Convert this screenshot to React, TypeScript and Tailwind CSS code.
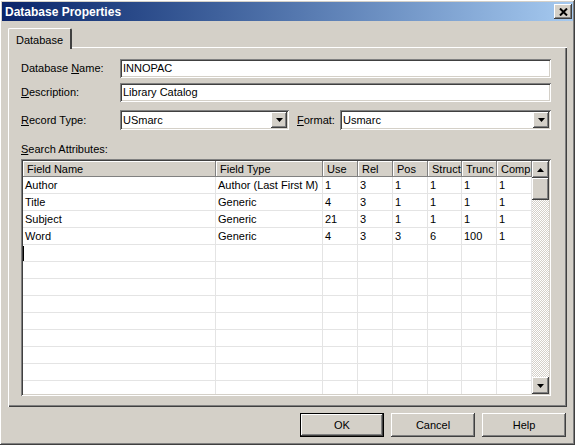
import React from 'react';

const raised =
  'shadow-[inset_-1px_-1px_#404040,inset_1px_1px_#ffffff,inset_-2px_-2px_#808080,inset_2px_2px_#d4d0c8]';
const sunken =
  'shadow-[inset_1px_1px_#808080,inset_-1px_-1px_#ffffff,inset_2px_2px_#404040,inset_-2px_-2px_#d4d0c8]';

const columns = [
  { name: 'Field Name', w: 'w-[193px]' },
  { name: 'Field Type', w: 'w-[107px]' },
  { name: 'Use', w: 'w-[35px]' },
  { name: 'Rel', w: 'w-[35px]' },
  { name: 'Pos', w: 'w-[35px]' },
  { name: 'Struct', w: 'w-[34px]' },
  { name: 'Trunc', w: 'w-[35px]' },
  { name: 'Comp', w: 'w-[35px]' },
];

const rows: string[][] = [
  ['Author', 'Author (Last First M)', '1', '3', '1', '1', '1', '1'],
  ['Title', 'Generic', '4', '3', '1', '1', '1', '1'],
  ['Subject', 'Generic', '21', '3', '1', '1', '1', '1'],
  ['Word', 'Generic', '4', '3', '3', '6', '100', '1'],
];

const emptyRows = 9;

function Arrow({ up }: { up?: boolean }) {
  return (
    <svg width="7" height="4" viewBox="0 0 7 4">
      {up ? <path d="M3.5 0 L7 4 L0 4 Z" fill="#000" /> : <path d="M0 0 L7 0 L3.5 4 Z" fill="#000" />}
    </svg>
  );
}

function TextField({ value }: { value: string }) {
  return (
    <div className={`flex-1 h-full bg-white flex items-center pl-[3px] ${sunken}`}>
      <span className="leading-none">{value}</span>
    </div>
  );
}

function Combo({ value, className }: { value: string; className: string }) {
  return (
    <div className={`h-full bg-white flex items-center p-[2px] ${sunken} ${className}`}>
      <span className="flex-1 pl-[1px] leading-none">{value}</span>
      <div className={`w-[16px] h-[16px] bg-[#d4d0c8] flex items-center justify-center ${raised}`}>
        <Arrow />
      </div>
    </div>
  );
}

function Label({ pre, key_, post, className }: { pre: string; key_: string; post: string; className?: string }) {
  return (
    <span className={className}>
      {pre}
      <span className="underline underline-offset-[1px]">{key_}</span>
      {post}
    </span>
  );
}

function DialogButton({ label, isDefault }: { label: string; isDefault?: boolean }) {
  return (
    <div
      className={`w-[84px] h-[24px] bg-[#d4d0c8] flex items-center justify-center ${
        isDefault ? 'border border-black' : ''
      }`}
    >
      <div className={`w-full h-full flex items-center justify-center ${raised}`}>{label}</div>
    </div>
  );
}

export default function App() {
  return (
    <div
      className={`w-[575px] h-[445px] bg-[#d4d0c8] flex flex-col p-[2px] text-[11px] text-black font-['Liberation_Sans',Arial,sans-serif] ${raised}`}
    >
      {/* title bar */}
      <div className="h-[19px] bg-gradient-to-r from-[#0a246a] to-[#a6caf0] flex items-center justify-between pl-[3px] pr-[1px]">
        <span className="text-white font-bold text-[12px]">Database Properties</span>
        <div className={`w-[18px] h-[15px] bg-[#d4d0c8] flex items-center justify-center ${raised}`}>
          <svg width="9" height="8" viewBox="0 0 9 8">
            <path d="M1 0.5 L8 7.5 M8 0.5 L1 7.5" stroke="#000" strokeWidth="2" />
          </svg>
        </div>
      </div>

      <div className="flex-1 flex flex-col px-[6px] pt-[7px]">
        {/* tab strip */}
        <div className="flex h-[20px] relative z-10 -mb-px">
          <div className="w-[64px] h-[21px] bg-[#d4d0c8] border-t border-l border-white border-r-2 border-r-[#404040] rounded-t-[2px] flex items-start pt-[3px] pl-[7px]">
            Database
          </div>
        </div>

        {/* tab page */}
        <div
          className={`h-[360px] bg-[#d4d0c8] flex flex-col pl-[13px] pr-[16px] pt-[12px] pb-[11px] shadow-[inset_1px_1px_#ffffff,inset_-1px_-1px_#404040,inset_-2px_-2px_#808080]`}
        >
          <div className="flex items-center h-[19px]">
            <Label className="w-[99px]" pre="Database " key_="N" post="ame:" />
            <TextField value="INNOPAC" />
          </div>
          <div className="flex items-center h-[19px] mt-[5px]">
            <Label className="w-[99px]" pre="" key_="D" post="escription:" />
            <TextField value="Library Catalog" />
          </div>
          <div className="flex items-center h-[20px] mt-[8px]">
            <Label className="w-[99px]" pre="" key_="R" post="ecord Type:" />
            <Combo className="w-[169px]" value="USmarc" />
            <Label className="w-[43px] ml-[8px]" pre="" key_="F" post="ormat:" />
            <Combo className="flex-1" value="Usmarc" />
          </div>
          <div className="flex items-center h-[16px] mt-[11px]">
            <Label pre="" key_="S" post="earch Attributes:" />
          </div>

          {/* grid */}
          <div className={`flex-1 mt-[2px] bg-white p-[2px] flex overflow-hidden ${sunken}`}>
            <div className="flex flex-col w-[509px] overflow-hidden">
              <div className="flex h-[16px] shrink-0">
                {columns.map((c) => (
                  <div
                    key={c.name}
                    className={`${c.w} shrink-0 h-full bg-[#d4d0c8] pl-[4px] flex items-center whitespace-nowrap overflow-hidden shadow-[inset_-1px_-1px_#808080,inset_1px_1px_#ffffff]`}
                  >
                    {c.name}
                  </div>
                ))}
              </div>
              {rows.map((r, i) => (
                <div key={i} className="flex h-[17px] shrink-0 border-b border-[#e4e4e4]">
                  {r.map((v, j) => (
                    <div
                      key={j}
                      className={`${columns[j].w} shrink-0 h-full pl-[2px] flex items-center whitespace-nowrap overflow-hidden border-r border-[#e4e4e4]`}
                    >
                      {v}
                    </div>
                  ))}
                </div>
              ))}
              {Array.from({ length: emptyRows }).map((_, i) => (
                <div key={`e${i}`} className="flex h-[17px] shrink-0 border-b border-[#e4e4e4]">
                  {columns.map((c, j) => (
                    <div key={j} className={`${c.w} shrink-0 h-full flex items-center border-r border-[#e4e4e4]`}>
                      {i === 0 && j === 0 && <span className="w-px h-[15px] bg-black" />}
                    </div>
                  ))}
                </div>
              ))}
            </div>

            {/* vertical scrollbar */}
            <div className="w-[17px] flex flex-col bg-[repeating-conic-gradient(#ffffff_0_25%,#d4d0c8_0_50%)] bg-[length:2px_2px]">
              <div className={`h-[17px] bg-[#d4d0c8] flex items-center justify-center ${raised}`}>
                <Arrow up />
              </div>
              <div className={`h-[22px] bg-[#d4d0c8] ${raised}`} />
              <div className="flex-1" />
              <div className={`h-[17px] bg-[#d4d0c8] flex items-center justify-center ${raised}`}>
                <Arrow />
              </div>
            </div>
          </div>
        </div>

        {/* dialog buttons */}
        <div className="flex justify-end gap-[7px] mt-[6px] pr-[1px]">
          <DialogButton label="OK" isDefault />
          <DialogButton label="Cancel" />
          <DialogButton label="Help" />
        </div>
      </div>
    </div>
  );
}
